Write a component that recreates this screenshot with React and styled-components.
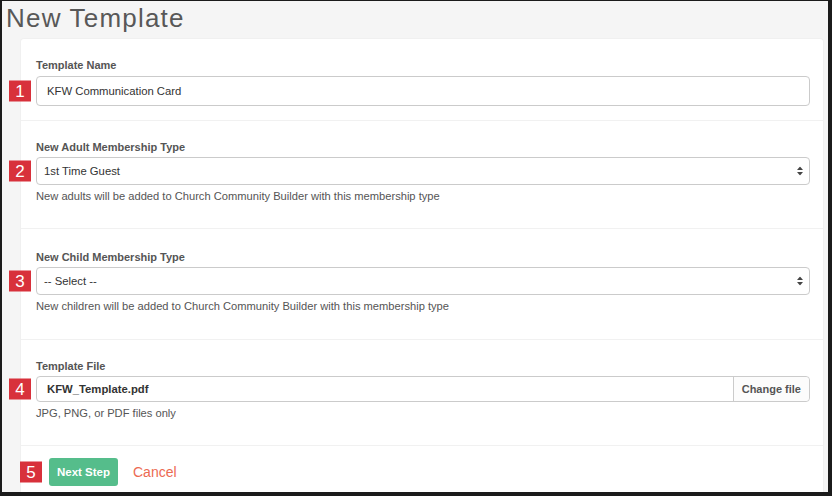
import React from 'react';
import styled, { createGlobalStyle } from 'styled-components';

const GlobalStyle = createGlobalStyle`
  html, body {
    margin: 0;
    padding: 0;
  }
  body {
    font-family: 'Liberation Sans', Arial, sans-serif;
  }
`;

const Frame = styled.div`
  box-sizing: border-box;
  width: 832px;
  height: 496px;
  border-style: solid;
  border-color: #1b1b1b;
  border-width: 1px 4px 4px 2px;
  background: #f5f5f5;
  display: flex;
  flex-direction: column;
  overflow: hidden;
`;

const Title = styled.h1`
  margin: 0;
  height: 37px;
  box-sizing: border-box;
  padding: 4px 0 0 4px;
  font-size: 26px;
  line-height: 26px;
  font-weight: normal;
  letter-spacing: 1.2px;
  color: #585858;
`;

const Panel = styled.div`
  flex: 1;
  margin: 0 4px 0 18px;
  background: #fff;
  border: 1px solid #f0f0f0;
  border-bottom: none;
  border-radius: 4px 4px 0 0;
  display: flex;
  flex-direction: column;
`;

const Section = styled.div`
  padding: ${(p) => p.top}px 13px ${(p) => p.bottom}px 15px;
  border-bottom: 1px solid #f1f1f1;
`;

const Label = styled.div`
  font-size: 11px;
  line-height: 15px;
  font-weight: bold;
  color: #555;
  margin-bottom: ${(p) => (p.gap ? p.gap : 2)}px;
`;

const Field = styled.div`
  position: relative;
  display: flex;
  height: ${(p) => p.h}px;
  border: 1px solid #cbcbcb;
  border-radius: 4px;
  box-sizing: border-box;
  background: #fff;
`;

const Badge = styled.div`
  position: absolute;
  left: ${(p) => (p.left ? p.left : -28)}px;
  top: 50%;
  transform: translateY(-50%);
  width: 22px;
  height: 21px;
  background: #d8313b;
  color: #fff;
  font-size: 17px;
  line-height: 21px;
  text-align: center;
`;

const TextInput = styled.input`
  flex: 1;
  min-width: 0;
  border: none;
  outline: none;
  background: transparent;
  padding: 0 0 0 10px;
  font-family: 'Liberation Sans', Arial, sans-serif;
  font-size: 11.3px;
  font-weight: ${(p) => (p.bold ? 'bold' : 'normal')};
  color: #333;
  border-radius: 4px;
`;

const Select = styled.select`
  flex: 1;
  appearance: none;
  -webkit-appearance: none;
  border: none;
  outline: none;
  background: transparent;
  padding: 0 0 0 7px;
  font-family: 'Liberation Sans', Arial, sans-serif;
  font-size: 11.3px;
  color: #333;
  border-radius: 4px;
`;

const Arrows = styled.svg`
  position: absolute;
  right: 6px;
  top: 50%;
  transform: translateY(-50%);
  pointer-events: none;
`;

const Help = styled.div`
  margin-top: 4px;
  font-size: 11.15px;
  line-height: 15px;
  color: #555;
`;

const ChangeButton = styled.div`
  display: flex;
  align-items: center;
  padding: 0 8px;
  border-left: 1px solid #cbcbcb;
  font-size: 11px;
  font-weight: bold;
  color: #555;
  background: #fcfcfc;
  border-radius: 0 4px 4px 0;
`;

const Footer = styled.div`
  display: flex;
  align-items: center;
  padding: 12px 0 0 28px;
`;

const ButtonWrap = styled.div`
  position: relative;
  display: flex;
  align-items: center;
`;

const NextButton = styled.button`
  height: 28px;
  width: 69px;
  border: none;
  border-radius: 3px;
  background: #55bd8b;
  color: #fff;
  font-family: 'Liberation Sans', Arial, sans-serif;
  font-size: 11.5px;
  font-weight: bold;
  padding: 0;
`;

const Cancel = styled.span`
  margin-left: 15px;
  font-size: 14px;
  color: #ec6a52;
`;

const SelectArrows = () => (
  <Arrows width="6" height="9" viewBox="0 0 6 9">
    <path d="M3 0 L6 3.6 L0 3.6 Z" fill="#444" />
    <path d="M3 9 L6 5.4 L0 5.4 Z" fill="#444" />
  </Arrows>
);

const App = () => {
  return (
    <>
      <GlobalStyle />
      <Frame>
        <Title>New Template</Title>
        <Panel>
          <Section top={19} bottom={14}>
            <Label gap={3}>Template Name</Label>
            <Field h={30}>
              <Badge>1</Badge>
              <TextInput defaultValue="KFW Communication Card" />
            </Field>
          </Section>
          <Section top={19} bottom={24}>
            <Label>New Adult Membership Type</Label>
            <Field h={28}>
              <Badge>2</Badge>
              <Select defaultValue="guest">
                <option value="guest">1st Time Guest</option>
              </Select>
              <SelectArrows />
            </Field>
            <Help>New adults will be added to Church Community Builder with this membership type</Help>
          </Section>
          <Section top={21} bottom={25}>
            <Label>New Child Membership Type</Label>
            <Field h={28}>
              <Badge>3</Badge>
              <Select defaultValue="">
                <option value="">-- Select --</option>
              </Select>
              <SelectArrows />
            </Field>
            <Help>New children will be added to Church Community Builder with this membership type</Help>
          </Section>
          <Section top={19} bottom={24}>
            <Label>Template File</Label>
            <Field h={26}>
              <Badge>4</Badge>
              <TextInput bold readOnly value="KFW_Template.pdf" />
              <ChangeButton>Change file</ChangeButton>
            </Field>
            <Help>JPG, PNG, or PDF files only</Help>
          </Section>
          <Footer>
            <ButtonWrap>
              <Badge left={-29}>5</Badge>
              <NextButton>Next Step</NextButton>
            </ButtonWrap>
            <Cancel>Cancel</Cancel>
          </Footer>
        </Panel>
      </Frame>
    </>
  );
};

export default App;
